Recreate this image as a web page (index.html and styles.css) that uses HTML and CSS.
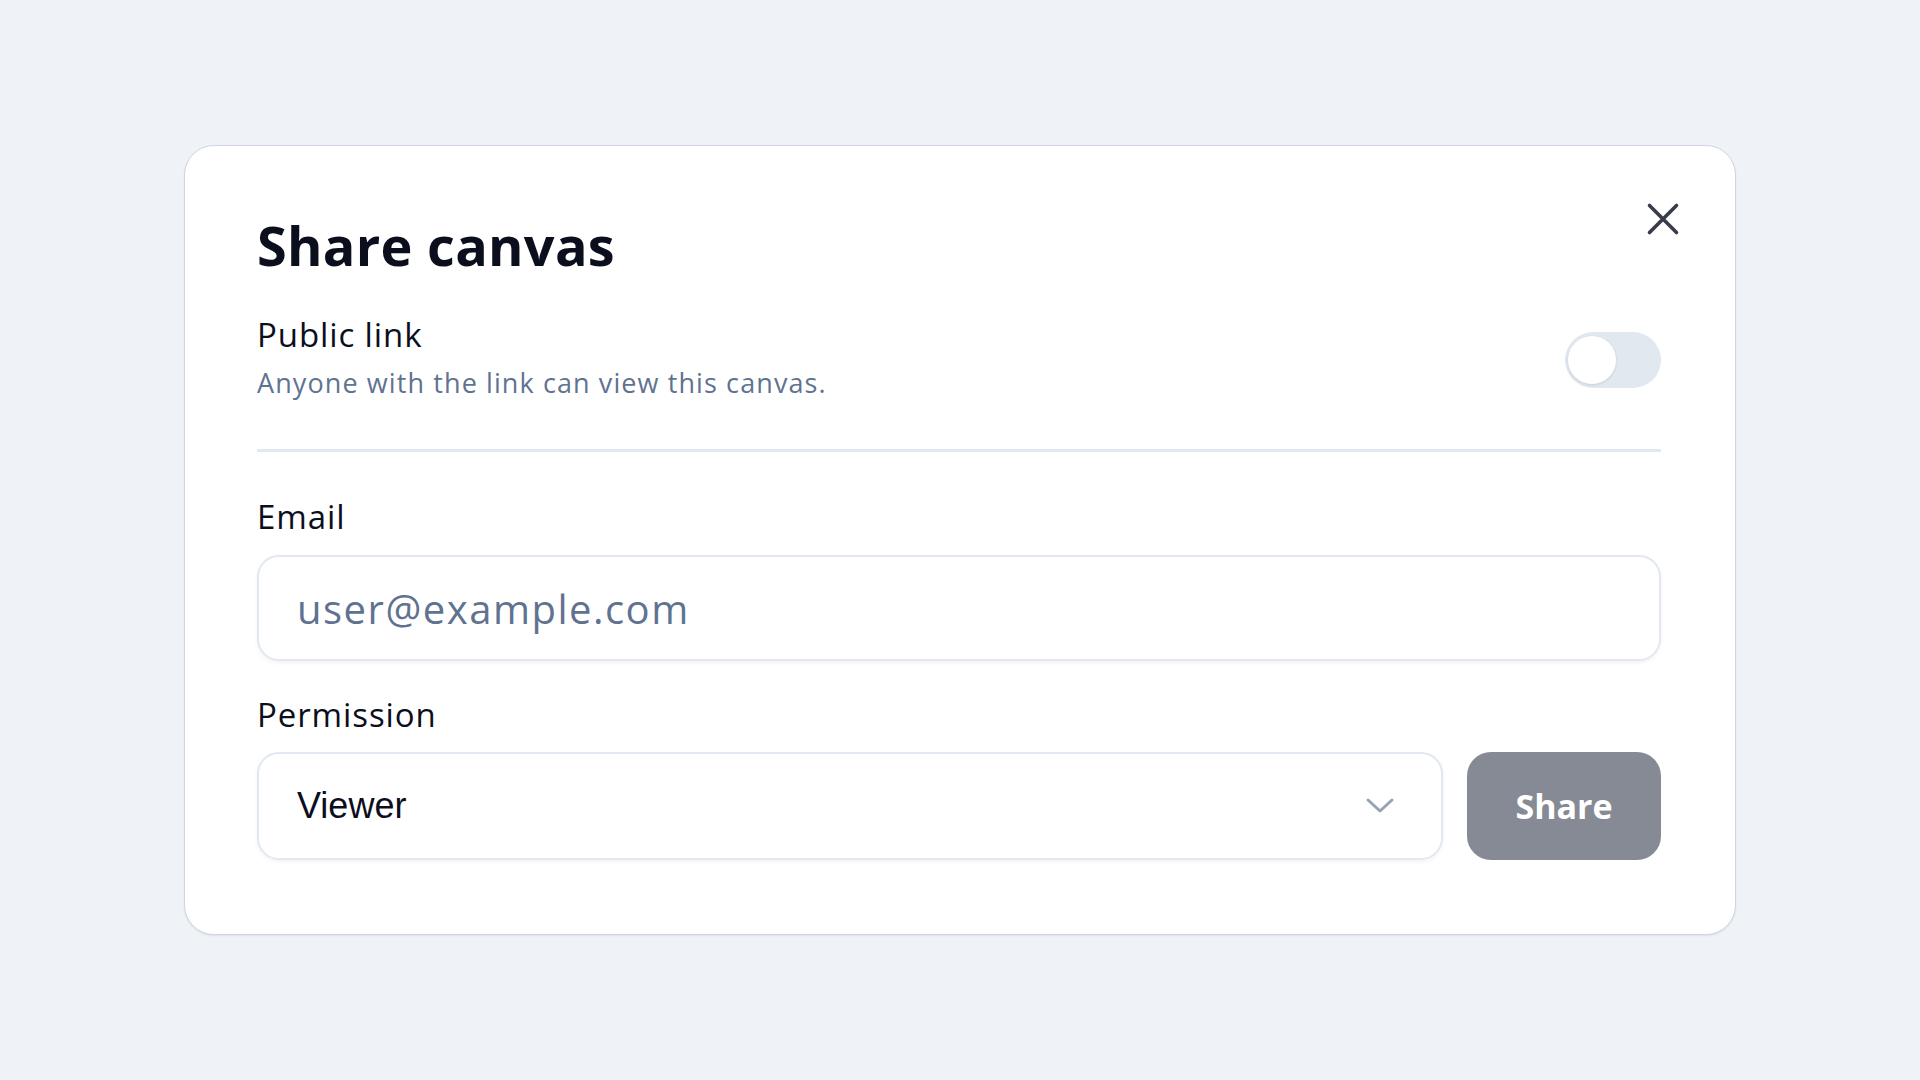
FILE: index.html
```html
<!DOCTYPE html>
<html lang="en">
<head>
<meta charset="utf-8">
<title>Share canvas</title>
<link rel="stylesheet" href="styles.css">
</head>
<body>
<main class="page">
  <section class="dialog" role="dialog" aria-labelledby="dlg-title">
    <header class="dialog-head">
      <h1 id="dlg-title" class="title">Share canvas</h1>
      <button class="close" aria-label="Close">
        <svg width="34" height="34" viewBox="0 0 34 34" fill="none" stroke="#383c48" stroke-width="3.6" stroke-linecap="round"><path d="M3.5 3.5 L30.5 30.5 M30.5 3.5 L3.5 30.5"/></svg>
      </button>
    </header>
    <div class="public-row">
      <div class="public-text">
        <div class="label">Public link</div>
        <div class="hint">Anyone with the link can view this canvas.</div>
      </div>
      <div class="toggle"><span class="knob"></span></div>
    </div>
    <hr class="divider">
    <label class="label field-label" for="email">Email</label>
    <div class="input"><span class="placeholder">user@example.com</span></div>
    <div class="label field-label perm-label">Permission</div>
    <div class="perm-row">
      <div class="select">
        <span class="select-value">Viewer</span>
        <svg class="chev" width="30" height="18" viewBox="0 0 30 18" fill="none" stroke="#9aa3b2" stroke-width="3" stroke-linecap="round" stroke-linejoin="round"><path d="M3 3 L15 14 L27 3"/></svg>
      </div>
      <button class="share">Share</button>
    </div>
  </section>
</main>
</body>
</html>
```
FILE: styles.css
```css
* { box-sizing: border-box; }
html, body { margin: 0; padding: 0; }
body {
  background: #eff2f7;
  font-family: "Open Sans", "Inter", sans-serif;
  color: #0b0f1d;
}
.page {
  width: 1920px;
  height: 1080px;
  display: flex;
  align-items: center;
  justify-content: center;
}
.dialog {
  width: 1552px;
  background: #fff;
  border: 1.5px solid #cfd6e1;
  border-radius: 30px;
  padding: 66px 74px 74px 72px;
  box-shadow: 0 1px 2px rgba(15, 23, 42, 0.08);
}
.dialog-head {
  display: flex;
  justify-content: space-between;
  align-items: flex-start;
}
.title {
  margin: 0;
  font-size: 54px;
  font-weight: 700;
  line-height: 66px;
  letter-spacing: 0.3px;
  color: #0b0f1d;
}
.close {
  border: 0;
  background: transparent;
  padding: 0;
  margin-top: -10px;
  margin-right: -19px;
  width: 34px;
  height: 34px;
}
.public-row {
  display: flex;
  justify-content: space-between;
  align-items: center;
  margin-top: 35px;
}
.label {
  font-size: 33px;
  font-weight: 500;
  line-height: 44px;
  letter-spacing: 0.9px;
  color: #0b0f1d;
}
.hint {
  font-size: 27px;
  line-height: 36px;
  letter-spacing: 1.1px;
  margin-top: 8px;
  color: #5f7391;
}
.toggle {
  width: 96px;
  height: 56px;
  border-radius: 28px;
  background: #e2e8f0;
  position: relative;
  margin-top: 6px;
}
.knob {
  position: absolute;
  left: 3px;
  top: 4px;
  width: 48px;
  height: 48px;
  border-radius: 50%;
  background: #fff;
  box-shadow: 0 1px 3px rgba(15, 23, 42, 0.12);
}
.divider {
  border: 0;
  height: 3px;
  background: #e2e8f0;
  margin: 48px 0 0;
}
.field-label {
  display: block;
  margin-top: 43px;
}
.input {
  margin-top: 16px;
  height: 106px;
  border: 2px solid #e2e8f0;
  border-radius: 22px;
  display: flex;
  align-items: center;
  padding: 0 38px;
  box-shadow: 0 2px 4px rgba(15, 23, 42, 0.05);
}
.placeholder {
  font-size: 40px;
  letter-spacing: 1.5px;
  color: #5f7391;
}
.perm-label { margin-top: 32px; }
.perm-row {
  display: flex;
  gap: 24px;
  margin-top: 15px;
}
.select {
  flex: 1;
  height: 108px;
  border: 2px solid #e2e8f0;
  border-radius: 22px;
  display: flex;
  align-items: center;
  justify-content: space-between;
  padding: 0 46px 0 38px;
  box-shadow: 0 2px 4px rgba(15, 23, 42, 0.05);
}
.select-value {
  font-family: "Liberation Sans", Arial, sans-serif;
  font-size: 36px;
  color: #0b0f1d;
}
.share {
  width: 194px;
  height: 108px;
  border: 0;
  border-radius: 24px;
  background: #858a95;
  color: #fff;
  font-family: "Open Sans", sans-serif;
  font-size: 34px;
  font-weight: 700;
}
```
